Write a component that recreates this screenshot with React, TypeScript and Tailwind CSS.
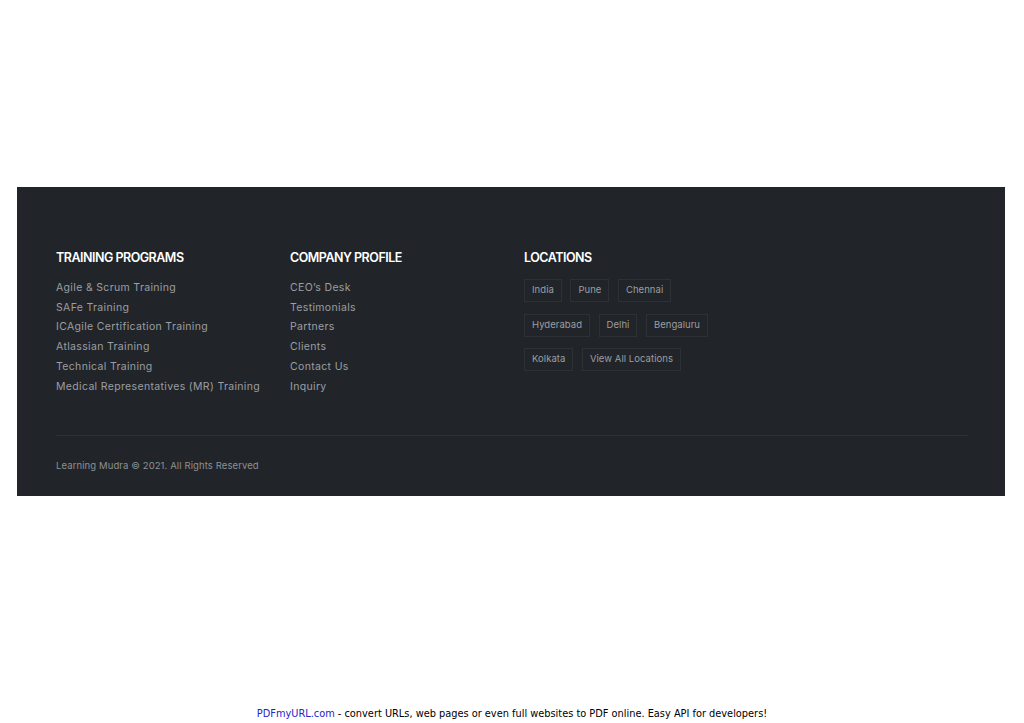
import React from "react";

const training = [
  "Agile & Scrum Training",
  "SAFe Training",
  "ICAgile Certification Training",
  "Atlassian Training",
  "Technical Training",
  "Medical Representatives (MR) Training",
];
const company = ["CEO’s Desk", "Testimonials", "Partners", "Clients", "Contact Us", "Inquiry"];
const locRows = [["India", "Pune", "Chennai"], ["Hyderabad", "Delhi", "Bengaluru"], ["Kolkata", "View All Locations"]];

export default function App() {
  return (
    <div className="h-[723px] w-[1024px] bg-white flex flex-col overflow-hidden" style={{ fontFamily: "Inter, 'Open Sans', sans-serif" }}>
      <div className="mt-[187px] mx-[17px] w-[988px] h-[309px] bg-[#212529] pl-[39px] pr-[37px] pt-[63px] flex flex-col">
        <div className="flex">
          <div className="w-[234px]">
            <h4 className="text-[12.5px] leading-[16px] font-semibold text-white tracking-[-0.5px]">TRAINING PROGRAMS</h4>
            <ul className="mt-[12px]">
              {training.map((t) => (
                <li key={t} className="text-[10.5px] leading-[19.7px] text-[#9b9ea2] tracking-[0.34px]">{t}</li>
              ))}
            </ul>
          </div>
          <div className="w-[234px]">
            <h4 className="text-[12.5px] leading-[16px] font-semibold text-white tracking-[-0.5px]">COMPANY PROFILE</h4>
            <ul className="mt-[12px]">
              {company.map((t) => (
                <li key={t} className="text-[10.5px] leading-[19.7px] text-[#9b9ea2] tracking-[0.34px]">{t}</li>
              ))}
            </ul>
          </div>
          <div>
            <h4 className="text-[12.5px] leading-[16px] font-semibold text-white tracking-[-0.5px]">LOCATIONS</h4>
            <div className="mt-[13px] flex flex-col gap-[11.5px]">
              {locRows.map((row, i) => (
                <div key={i} className="flex gap-[8.5px]">
                  {row.map((l) => (
                    <span key={l} className="h-[23px] px-[7px] flex items-center border border-[#2c3136] text-[9.5px] text-[#9b9ea2] tracking-[0.05px]">{l}</span>
                  ))}
                </div>
              ))}
            </div>
          </div>
        </div>
        <div className="mt-auto border-t border-[#2b3035] pt-[23px] pb-[23px]">
          <p className="text-[9.5px] leading-[14px] text-[#8c9095] tracking-[0.1px]">Learning Mudra © 2021. All Rights Reserved</p>
        </div>
      </div>
      <div className="mt-auto pb-[2px] text-center text-[9.8px] leading-[14px] text-black" style={{ fontFamily: "'DejaVu Sans', Verdana, sans-serif" }}>
        <span className="text-[#2424c8]">PDFmyURL.com</span> - convert URLs, web pages or even full websites to PDF online. Easy API for developers!
      </div>
    </div>
  );
}
